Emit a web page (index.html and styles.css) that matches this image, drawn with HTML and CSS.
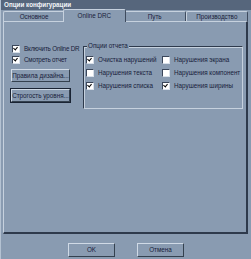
FILE: index.html
```html
<!DOCTYPE HTML>
<html>
  <head>
    <meta charset="UTF-8">
    <link rel="stylesheet" href="styles.css">
  </head>
  <body>
    <div class="dialog">
      <div class="titlebar">Опции конфигурации</div>
      <div class="tabs">
        <div class="tab">Основное</div>
        <div class="tab active">Online DRC</div>
        <div class="tab">Путь</div>
        <div class="tab">Производство</div>
      </div>
      <div class="panel">
        <div class="leftcol">
          <label class="check"><span class="box on"></span>Включить Online DR</label>
          <label class="check"><span class="box on"></span>Смотреть отчет</label>
          <div class="btn first">Правила дизайна...</div>
          <div class="btn focus">Строгость уровня...</div>
        </div>
        <div class="group">
          <div class="legend">Опции отчета</div>
          <div class="grid">
            <label class="check"><span class="box on"></span>Очистка нарушений</label>
            <label class="check"><span class="box"></span>Нарушения экрана</label>
            <label class="check"><span class="box"></span>Нарушения текста</label>
            <label class="check"><span class="box"></span>Нарушения компонент</label>
            <label class="check"><span class="box on"></span>Нарушения списка</label>
            <label class="check"><span class="box on"></span>Нарушения ширины</label>
          </div>
        </div>
      </div>
      <div class="footer">
        <div class="btn wide">OK</div>
        <div class="btn wide">Отмена</div>
      </div>
    </div>
  </body>
</html>
```

FILE: styles.css
```css
html, body {
  margin: 0;
  padding: 0;
  background: #899bb1;
}
.dialog {
  width: 251px;
  height: 259px;
  display: flex;
  flex-direction: column;
  font-family: "Liberation Sans", Arial, sans-serif;
  font-size: 6.3px;
  color: #18213a;
  background: #899bb1;
  box-sizing: border-box;
  border-left: 1px solid #b4c2d2;
}
.titlebar {
  height: 10px;
  line-height: 10px;
  background: #56667c;
  color: #f2f4f8;
  font-weight: bold;
  padding-left: 3px;
}
.tabs {
  display: flex;
  height: 11px;
  padding: 0 3px 0 2px;
  align-items: flex-end;
}
.tab {
  flex: 1;
  height: 9px;
  line-height: 9px;
  text-align: center;
  border: 1px solid #c6d1de;
  border-bottom: none;
  border-right-color: #3e4b5e;
  border-radius: 2px 2px 0 0;
}
.tab.active {
  height: 12px;
  line-height: 12px;
  margin: 0 -2px -1px;
  position: relative;
  z-index: 1;
  background: #899bb1;
}
.panel {
  margin: 0 3px 0 2px;
  height: 213px;
  box-sizing: border-box;
  border: 1px solid #c6d1de;
  border-right: 2px solid #2e3a4c;
  border-bottom: 2px solid #2e3a4c;
  display: flex;
  gap: 2px;
  padding: 21px 5px 0 7px;
  align-items: flex-start;
}
.leftcol {
  display: flex;
  flex-direction: column;
  width: 70px;
  flex: none;
}
.check {
  display: flex;
  align-items: center;
  gap: 4px;
  height: 11px;
  white-space: nowrap;
}
.leftcol .check {
  padding-left: 1px;
  letter-spacing: -0.2px;
}
.box {
  width: 6px;
  height: 6px;
  background: #ffffff;
  border: 1px solid #3a465a;
  border-right-color: #d8e0ea;
  border-bottom-color: #d8e0ea;
  position: relative;
  flex: none;
}
.box.on::after {
  content: "";
  position: absolute;
  left: 1px;
  top: 0px;
  width: 2px;
  height: 3px;
  border: solid #000;
  border-width: 0 1.5px 1.5px 0;
  transform: rotate(40deg);
}
.btn {
  width: 57px;
  height: 11px;
  line-height: 11px;
  text-align: center;
  border: 1px solid #d0dae6;
  border-right-color: #34414f;
  border-bottom-color: #34414f;
  margin-top: 7px;
  white-space: nowrap;
}
.btn.first {
  margin-top: 4px;
}
.btn.focus {
  outline: 1px solid #1a2434;
}
.group {
  flex: 1;
  margin-top: 3px;
  height: 54px;
  border: 1px solid #2e3a4c;
  border-right-color: #c6d1de;
  border-bottom-color: #c6d1de;
  box-shadow: inset 1px 1px 0 #c6d1de;
  position: relative;
  padding: 7px 2px 0 2px;
}
.legend {
  position: absolute;
  top: -5px;
  left: 3px;
  padding: 0 1px;
  background: #899bb1;
}
.grid {
  display: grid;
  grid-template-columns: 76px 1fr;
  row-gap: 2px;
}
.footer {
  display: flex;
  justify-content: center;
  gap: 22px;
  padding-top: 9px;
}
.btn.wide {
  width: 45px;
  height: 12px;
  line-height: 12px;
  margin-top: 0;
}
```
